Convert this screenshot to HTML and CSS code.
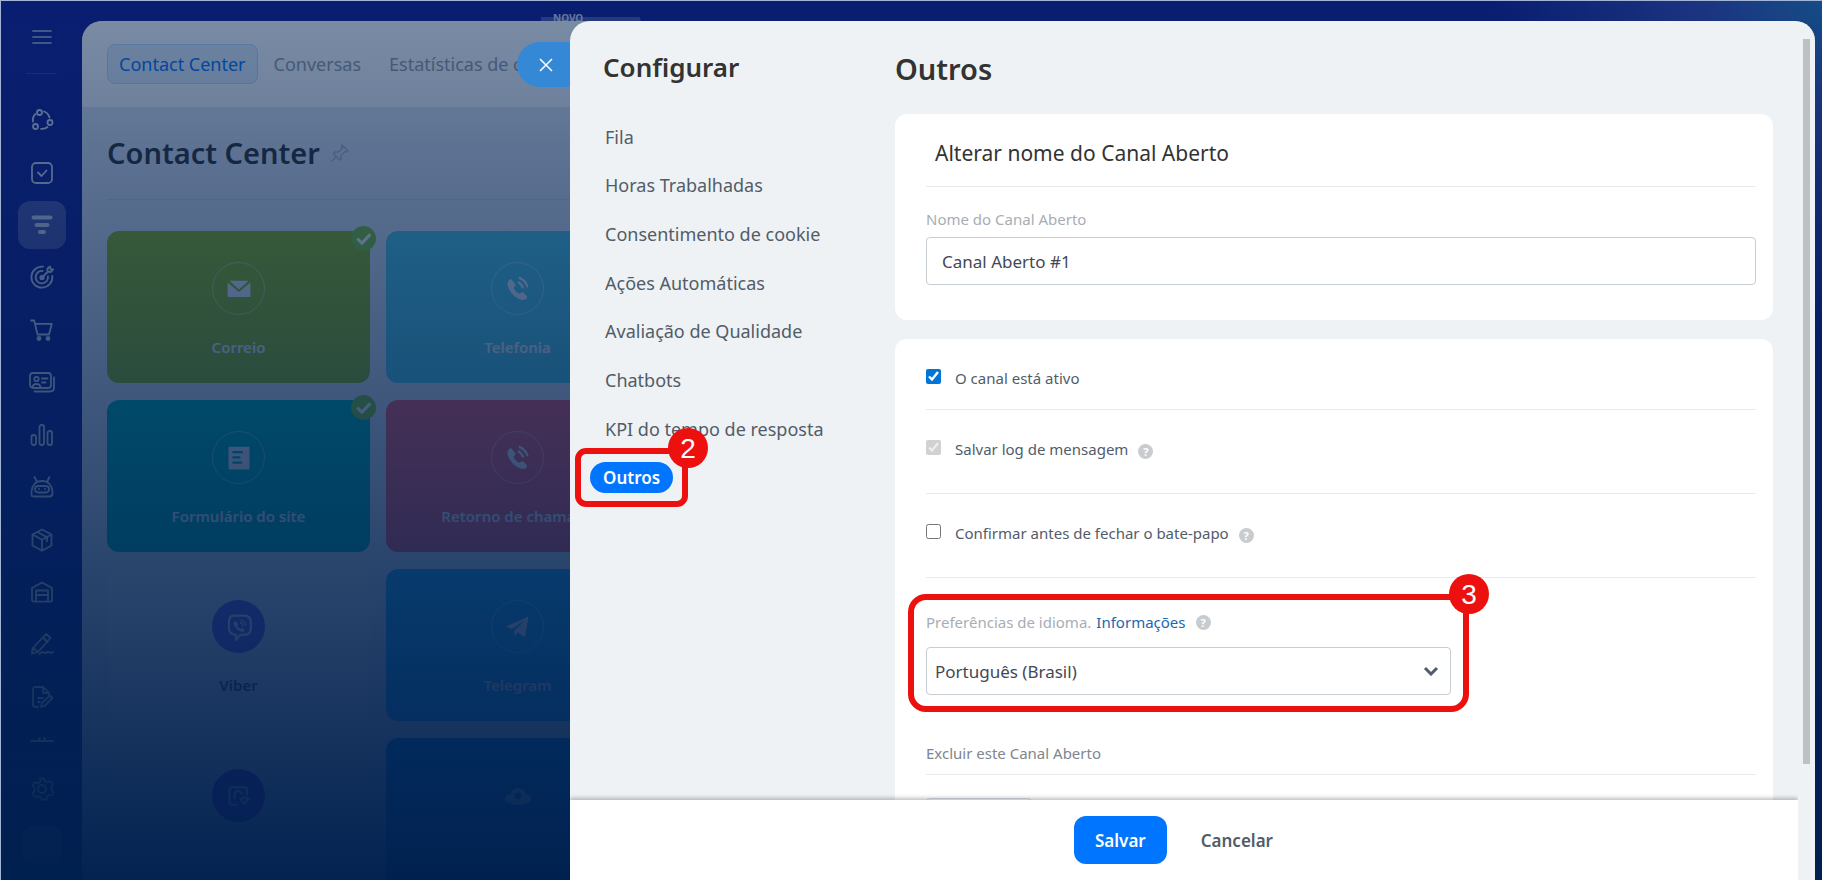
FILE: index.html
```html
<!DOCTYPE html>
<html lang="pt-BR">
<head>
    <meta charset="UTF-8">
    <meta name="viewport" content="width=device-width, initial-scale=1.0">
    <title>Contact Center - Configurar</title>
    <link rel="stylesheet" href="styles.css">
</head>
<body>
    <div class="app">
        <aside class="sidebar">
            <button class="menu-button" aria-label="Menu">
                <svg class="icon" viewBox="0 0 24 24"><path d="M3 6h18M3 12h18M3 18h18"/></svg>
            </button>
            <hr class="sidebar-line">
            <ul class="sidebar-list">
                <li><a href="#" aria-label="Feed"><svg class="icon" viewBox="0 0 24 24"><circle cx="9.500" cy="4.500" r="2.500"/><circle cx="20" cy="14.500" r="2.500"/><circle cx="5.500" cy="18.500" r="2.500"/><path d="M3 13.500C2.500 10.500 3.200 8 5.500 6M14 3.500c2.800.9 4.700 3 5.500 6M11 20.800c2.800.3 4.800-.3 6.500-1.800"/></svg></a></li>
                <li><a href="#" aria-label="Tarefas"><svg class="icon" viewBox="0 0 24 24"><rect x="2" y="2" width="20" height="20" rx="4"/><path d="M8 11.500l3.500 3.500 5-5.500"/></svg></a></li>
                <li><a href="#" class="current" aria-label="CRM"><svg class="icon icon-thick" viewBox="0 0 24 24"><path d="M3.500 4.500h17M6.500 12h11M10 19h4"/></svg></a></li>
                <li><a href="#" aria-label="Marketing"><svg class="icon" viewBox="0 0 24 24"><path d="M13 1.700A10.500 10.500 0 1 0 22.300 11"/><path d="M12.500 6A6.200 6.200 0 1 0 18 11.500"/><circle cx="12" cy="12.500" r="1.700"/><path d="M12 12.500l6-6M17.500 6.500v-3l2.500-2 .5 2.500 2.500.5-2 2.500z"/></svg></a></li>
                <li><a href="#" aria-label="Loja"><svg class="icon" viewBox="0 0 24 24"><path d="M1 2.500h3.200l3.300 14h11.500l2.800-10.700H5"/><circle cx="9" cy="20.500" r="1.500" fill="currentColor"/><circle cx="18" cy="20.500" r="1.500" fill="currentColor"/></svg></a></li>
                <li><a href="#" aria-label="Contatos"><svg class="icon icon-wide" viewBox="0 0 28 24"><rect x="2" y="3" width="21" height="15" rx="3"/><path d="M26 7.500v10c0 3-1.500 4-4 4H6.500"/><circle cx="8.500" cy="9" r="2.200"/><path d="M4.500 17c.5-4 7.500-4 8 0M14 8.500h5.500M14 12.500h3.500"/></svg></a></li>
                <li><a href="#" aria-label="Relatórios"><svg class="icon" viewBox="0 0 24 24"><rect x="1.500" y="12" width="4.500" height="10" rx="2"/><rect x="9.500" y="2" width="4.500" height="20" rx="2"/><rect x="17.500" y="8" width="4.500" height="14" rx="2"/></svg></a></li>
                <li><a href="#" aria-label="Automação"><svg class="icon" viewBox="0 0 24 24"><path d="M6.500 6L4.500 2M17.500 6l2-4M1.500 20.500v-4C2 10 6 6 12 6s10 4 10.500 10.500v2c0 2-1 3-3 3h-15c-2 0-3-.5-3-1z"/><rect x="5" y="11" width="14" height="6.500" rx="3.200"/><path d="M9 14h.1M15 14h.1"/></svg></a></li>
                <li><a href="#" aria-label="Estoque"><svg class="icon" viewBox="0 0 24 24"><path d="M12 1.500l9.500 5v11L12 22.800l-9.500-5.300v-11zM2.500 6.500l9.500 5.300 9.500-5.300M12 11.800v11M7.500 4l9.500 5.300v4"/></svg></a></li>
                <li><a href="#" aria-label="Armazém"><svg class="icon" viewBox="0 0 24 24"><path d="M2 8l10-5.500L22 8v12c0 1-.7 1.700-1.700 1.700H3.700C2.700 21.700 2 21 2 20zM6 21.500V10.500h12v11M6 15h12"/></svg></a></li>
                <li><a href="#" aria-label="Assinatura"><svg class="icon" viewBox="0 0 24 24"><path d="M2.500 16.500L16 2l4.500 4L8 20l-6 1.500zM13 5.500l4.500 4.500M3 16l5 4M9.500 22c4-5 4 1 7-1.500s2 2.500 6.500-.5"/></svg></a></li>
                <li><a href="#" aria-label="Documentos"><svg class="icon" viewBox="0 0 24 24"><path d="M8 22H5.500c-1.500 0-2.500-1-2.500-2.500v-15C3 3 4 2 5.500 2H13l6 6v2M13 2v6h6M8 13h5M8 17h2M11 22l1-4 8-7.500 2.500 2.500-8 8z"/></svg></a></li>
            </ul>
            <div class="sidebar-more">
                <svg class="icon" viewBox="0 0 24 24"><path d="M1 12h22M8 12l2-3M14 9l2 3"/></svg>
            </div>
            <button class="settings-button" aria-label="Configurações">
                <svg class="icon" viewBox="0 0 24 24"><circle cx="12" cy="12" r="4"/><path d="M10 1.500h4l1 3 2.500 1 3-1.300 2.300 3-1.800 2.800.5 2.500 2 2-1.500 3.500-3 .2-2 2-.5 2.500h-4.500l-1.500-2.500-3-.7-3 .3-2-3.500 2-2.500v-2.500l-2-2.800 2.300-3.300 3.200 1 2.500-1.500z"/></svg>
            </button>
            <div class="avatar"></div>
        </aside>

        <div class="workspace">
            <div class="topbar"><span class="new-badge">NOVO</span></div>
            <main class="panel">
                <nav class="tabs">
                    <a href="#" class="tab tab-active">Contact Center</a>
                    <a href="#" class="tab">Conversas</a>
                    <a href="#" class="tab">Estatísticas de conversas</a>
                </nav>
                <div class="panel-title">
                    <h1>Contact Center</h1>
                    <svg class="pin" viewBox="0 0 20 20"><path d="M12 2l6 6-1.500 1-1.500-.5-4 4v3.500L9.500 17 3.500 10.500 5 9h3.500l4-4L11.500 3.500zM6 14l-4.500 4.500"/></svg>
                </div>
                <div class="tiles">
                    <a href="#" class="tile tile-mail">
                        <span class="tile-check"><svg viewBox="0 0 24 24"><path d="M6 12l4.500 4.500L18.500 8"/></svg></span>
                        <span class="tile-icon"><svg viewBox="0 0 32 32"><path d="M5 6.500h22l-11 10zM3 8.500l13 11 13-11V25H3z"/></svg></span>
                        <span class="tile-name">Correio</span>
                    </a>
                    <a href="#" class="tile tile-phone">
                        <span class="tile-icon"><svg viewBox="0 0 32 32"><path d="M8 4.500c-4 1.500-5 5.500-3 10 3 6.500 8 11.500 14 13.500 4 1.200 7.500-.5 7.500-3.500l-5-5-4 2c-3-1.500-5.500-4-6.500-7l2.500-3.500z"/><path class="wave" d="M16 8c3 1.500 5 4 6 7.500M17 3c5 2 8.500 6 10 11"/></svg></span>
                        <span class="tile-name">Telefonia</span>
                    </a>
                    <a href="#" class="tile tile-form">
                        <span class="tile-check"><svg viewBox="0 0 24 24"><path d="M6 12l4.500 4.500L18.500 8"/></svg></span>
                        <span class="tile-icon"><svg viewBox="0 0 32 32"><path fill-rule="evenodd" d="M4 3h24v26H4zM8.500 8v2.500h12V8zM8.500 14v2.500h9V14zM8.500 20v2.500h11V20z"/></svg></span>
                        <span class="tile-name">Formulário do site</span>
                    </a>
                    <a href="#" class="tile tile-callback">
                        <span class="tile-icon"><svg viewBox="0 0 32 32"><path d="M8 4.500c-4 1.500-5 5.500-3 10 3 6.500 8 11.500 14 13.500 4 1.200 7.500-.5 7.500-3.500l-5-5-4 2c-3-1.500-5.500-4-6.500-7l2.500-3.500z"/><path class="wave" d="M16 8c3 1.500 5 4 6 7.500M17 3c5 2 8.500 6 10 11"/></svg></span>
                        <span class="tile-name">Retorno de chamada</span>
                    </a>
                    <a href="#" class="tile tile-plain">
                        <span class="tile-icon icon-viber"><svg viewBox="0 0 32 32"><path class="wave" d="M10 3h12c4.500 0 7.500 2.500 7.500 8v6c0 5.500-2.500 8-8 8h-4l-5 5.500V25c-6-.5-8-3-8-8v-6c0-5.500 1.500-8 5.500-8z"/><path d="M12 9c-2.500 1-2.500 2.500-1.500 5 2 4 5 6.500 8.500 7.500 2 .5 3.500-1 3.500-2.500l-3-2-2 1c-2-1-3-2-3.500-4l1-1.500z"/><path class="thin" d="M17 11c2.500.5 3.500 2 4 4M17.500 8c3.500.5 6 3 6.500 6.500"/></svg></span>
                        <span class="tile-name">Viber</span>
                    </a>
                    <a href="#" class="tile tile-telegram">
                        <span class="tile-icon"><svg viewBox="0 0 32 32"><path d="M2 15.500L28 4l-4 24-8-6-4 5v-7l12-12L9 18.500z"/></svg></span>
                        <span class="tile-name">Telegram</span>
                    </a>
                    <a href="#" class="tile tile-plain">
                        <span class="tile-icon icon-whatsapp"><svg viewBox="0 0 32 32"><path class="wave" d="M14 26H8c-2 0-3-1-3-3V9c0-2 1-3 3-3h14c2 0 3 1 3 3v6M11 19v-5c0-5 8-5 8 0M18 20l4 5 5-5-5-3z"/></svg></span>
                    </a>
                    <a href="#" class="tile tile-cloud">
                        <span class="tile-icon icon-bare"><svg viewBox="0 0 32 32"><path fill-rule="evenodd" d="M1 20c0-4 3-6 6-6 2-5 5-7 9-7s8 3 9 7c4 0 6 3 6 6s-3 5-6 4c-5 3-13 3-18 0-4 0-6-1-6-4zM12 16a4 4 0 1 0 8 0a4 4 0 1 0-8 0z"/></svg></span>
                    </a>
                </div>
            </main>
        </div>

        <div class="overlay"></div>

        <section class="slider">
            <button class="close-button" aria-label="Fechar">
                <svg viewBox="0 0 14 14"><path d="M1 1l12 12M13 1L1 13"/></svg>
            </button>
            <div class="frame">
                <div class="content">
                    <nav class="settings-nav">
                        <h2>Configurar</h2>
                        <ul>
                            <li><a href="#">Fila</a></li>
                            <li><a href="#">Horas Trabalhadas</a></li>
                            <li><a href="#">Consentimento de cookie</a></li>
                            <li><a href="#">Ações Automáticas</a></li>
                            <li><a href="#">Avaliação de Qualidade</a></li>
                            <li><a href="#">Chatbots</a></li>
                            <li><a href="#">KPI do tempo de resposta</a></li>
                            <li>
                                <a href="#" class="selected">Outros</a>
                                <div class="mark mark-nav"><span class="mark-number">2</span></div>
                            </li>
                        </ul>
                    </nav>
                    <form class="settings" id="settings">
                        <h2>Outros</h2>
                        <div class="card card-name">
                            <h3>Alterar nome do Canal Aberto</h3>
                            <label class="field-label" for="lineName">Nome do Canal Aberto</label>
                            <input type="text" id="lineName" class="text-input" value="Canal Aberto #1">
                        </div>
                        <div class="card card-options">
                            <div class="option option-first">
                                <input type="checkbox" id="active" checked>
                                <label for="active">O canal está ativo</label>
                            </div>
                            <div class="option">
                                <input type="checkbox" id="saveLog" checked disabled>
                                <label for="saveLog">Salvar log de mensagem</label>
                                <span class="help">?</span>
                            </div>
                            <div class="option">
                                <input type="checkbox" id="confirmClose">
                                <label for="confirmClose">Confirmar antes de fechar o bate-papo</label>
                                <span class="help">?</span>
                            </div>
                            <div class="language">
                                <div class="language-label">
                                    <label for="language">Preferências de idioma.</label>
                                    <a href="#">Informações</a>
                                    <span class="help">?</span>
                                </div>
                                <div class="select-box">
                                    <select id="language">
                                        <option>Português (Brasil)</option>
                                    </select>
                                    <svg class="chevron" viewBox="0 0 16 10"><path d="M2 2l6 6 6-6"/></svg>
                                </div>
                                <div class="mark mark-language"><span class="mark-number">3</span></div>
                            </div>
                            <h4>Excluir este Canal Aberto</h4>
                            <button type="button" class="delete-button" aria-label="Excluir"></button>
                        </div>
                    </form>
                </div>
                <footer class="footer">
                    <button type="submit" form="settings" class="save-button">Salvar</button>
                    <button type="button" class="cancel-button">Cancelar</button>
                </footer>
            </div>
            <div class="scrollbar"><div class="thumb"></div></div>
        </section>
    </div>
</body>
</html>
```

FILE: styles.css
```css
* {
    box-sizing: border-box;
}

body {
    margin: 0;
    font-family: "Noto Sans", "Open Sans", sans-serif;
    color: #525c69;
}

h1, h2, h3, h4, ul {
    margin: 0;
    padding: 0;
}

ul {
    list-style: none;
}

a {
    color: inherit;
    text-decoration: none;
}

button {
    border: none;
    padding: 0;
    background: none;
    font-family: inherit;
    cursor: pointer;
}

.app {
    position: relative;
    display: flex;
    height: 100vh;
    overflow: hidden;
    border-top: 1px solid #a3b5d6;
    border-left: 1px solid #a3b5d6;
    background: radial-gradient(circle at 100% 0, #2a78c0 0, #3848b4 120px, #131c94 330px);
}

/* Sidebar */
.sidebar {
    display: flex;
    flex-direction: column;
    align-items: center;
    width: 81px;
    flex-shrink: 0;
    padding-top: 20px;
    color: #d2daea;
}

.icon {
    display: block;
    width: 24px;
    height: 24px;
    fill: none;
    stroke: currentColor;
    stroke-width: 1.8;
    stroke-linecap: round;
    stroke-linejoin: round;
}

.icon-wide {
    width: 28px;
}

.icon-thick {
    stroke-width: 4;
}

.menu-button {
    display: flex;
    align-items: center;
    height: 32px;
    color: #8592c6;
}

.sidebar-line {
    width: 31px;
    margin: 20px 0 20px;
    border: none;
    border-top: 1px solid #333fa6;
}

.sidebar-list {
    display: flex;
    flex-direction: column;
    height: 629px;
    flex-shrink: 0;
}

.sidebar-list li {
    display: flex;
    align-items: center;
    flex: 1;
}

.sidebar-list a {
    display: flex;
    align-items: center;
    justify-content: center;
    width: 48px;
    height: 48px;
    border-radius: 12px;
}

.sidebar-list .current {
    background: rgba(255, 255, 255, 0.26);
}

.sidebar-more {
    height: 22px;
    padding-top: 6px;
    overflow: hidden;
}

.settings-button {
    display: flex;
    margin: 32px 0 25px;
    color: #cfd6e6;
}

.avatar {
    width: 40px;
    height: 38px;
    border-radius: 12px;
    background: #6a5aa0;
    flex-shrink: 0;
}

/* Workspace */
.workspace {
    display: flex;
    flex-direction: column;
    flex: 1;
    margin-right: 7px;
}

.topbar {
    height: 20px;
    padding: 11px 0 0 459px;
    flex-shrink: 0;
}

.new-badge {
    display: block;
    width: 100px;
    padding-left: 12px;
    background: linear-gradient(transparent 5px, #4a56ae 5px);
    border-radius: 0 10px 0 0;
    color: #ccd3ea;
    font-size: 10px;
    line-height: 12px;
    font-weight: 700;
}

.panel {
    position: relative;
    flex: 1;
    min-height: 0;
    overflow: hidden;
    border-radius: 20px 20px 0 0;
    background: #e0e6f2;
}

.tabs {
    display: flex;
    align-items: center;
    gap: 4px;
    height: 86px;
    padding-left: 25px;
    background: #fafcff;
    white-space: nowrap;
}

.tab {
    padding: 0 11px;
    border: 1px solid transparent;
    border-radius: 8px;
    font-size: 18px;
    line-height: 38px;
    color: #969ca6;
}

.tab-active {
    border-color: #b4dcff;
    background: #e2edfb;
    color: #0075ff;
}

.panel-title {
    display: flex;
    align-items: center;
    gap: 10px;
    height: 93px;
    margin-left: 25px;
    border-bottom: 1px solid #cdd5e4;
}

.panel-title h1 {
    font-size: 29px;
    line-height: 40px;
    font-weight: 600;
    color: #333;
}

.pin {
    width: 20px;
    height: 20px;
    fill: none;
    stroke: #b0b9c9;
    stroke-width: 1.5;
}

.tiles {
    display: grid;
    grid-template-columns: 263px 263px;
    grid-auto-rows: 152px;
    gap: 17px 16px;
    padding: 31px 25px;
}

.tile {
    position: relative;
    display: flex;
    flex-direction: column;
    align-items: center;
    padding-top: 31px;
    border-radius: 12px;
    color: #f0f2ff;
}

.tile-mail {
    background: #92ba15;
}

.tile-phone {
    background: #54cbe4;
}

.tile-form {
    background: #00b4b0;
}

.tile-callback {
    background: #f85a6c;
}

.tile-telegram {
    background: #27b0f8;
}

.tile-cloud {
    background: #0d90e8;
}

.tile-plain {
    background: #e8ecf5;
    color: #454d58;
}

.tile-icon {
    display: flex;
    align-items: center;
    justify-content: center;
    width: 53px;
    height: 53px;
    border: 1px solid rgba(255, 255, 255, 0.4);
    border-radius: 50%;
}

.tile-icon svg {
    width: 28px;
    height: 28px;
    fill: #f0f2ff;
}

.tile-icon .wave, .tile-icon .thin {
    fill: none;
    stroke: #f0f2ff;
    stroke-width: 2.5;
}

.tile-icon .thin {
    stroke-width: 1.2;
}

.icon-viber {
    border-color: transparent;
    background: #7360f2;
}

.icon-whatsapp {
    border-color: transparent;
    background: #6a30d8;
}

.icon-bare {
    border-color: transparent;
}

.tile-name {
    margin-top: 21px;
    font-size: 15px;
    line-height: 22px;
    font-weight: 600;
}

.tile-check {
    position: absolute;
    top: -5px;
    right: -6px;
    width: 25px;
    height: 25px;
    border-radius: 50%;
    background: #84c832;
}

.tile-check svg {
    display: block;
    fill: none;
    stroke: #fff;
    stroke-width: 3;
}

.overlay {
    position: absolute;
    inset: 0;
    background: linear-gradient(rgba(0, 32, 78, 0.5), rgba(0, 32, 78, 0.99));
}

/* Slider with the settings */
.slider {
    position: absolute;
    top: 20px;
    right: 7px;
    bottom: 0;
    left: 569px;
    display: flex;
    border-radius: 20px 20px 0 0;
    background: #eef2f4;
}

.close-button {
    position: absolute;
    top: 21px;
    left: -53px;
    display: flex;
    align-items: center;
    width: 53px;
    height: 45px;
    padding-left: 22px;
    border-radius: 23px 0 0 23px;
    background: #3488d6;
}

.close-button svg {
    width: 14px;
    height: 14px;
    stroke: #fff;
    stroke-width: 1.5;
}

.frame {
    display: flex;
    flex-direction: column;
    flex: 1;
    min-width: 0;
}

.content {
    display: flex;
    flex: 1;
    min-height: 0;
    overflow: hidden;
}

.settings-nav {
    width: 325px;
    flex-shrink: 0;
    padding: 28px 20px 0;
}

.settings-nav h2 {
    padding-left: 13px;
    font-size: 26px;
    line-height: 36px;
    font-weight: 600;
    color: #333;
}

.settings-nav ul {
    display: flex;
    flex-direction: column;
    height: 389px;
    margin-top: 28px;
}

.settings-nav li {
    position: relative;
    display: flex;
    align-items: center;
    flex: 1;
}

.settings-nav a {
    padding: 0 15px;
    border-radius: 16px;
    font-size: 18px;
    line-height: 31px;
    white-space: nowrap;
}

.settings-nav .selected {
    padding: 0 13px;
    background: #0075ff;
    color: #fff;
    font-size: 17px;
    font-weight: 600;
}

.settings {
    flex: 1;
    min-width: 0;
    padding: 28px 25px 0 0;
}

.settings h2 {
    font-size: 29px;
    line-height: 40px;
    font-weight: 600;
    color: #333;
}

.card {
    padding: 0 17px 35px 31px;
    border-radius: 12px;
    background: #fff;
}

.card-name {
    margin: 25px 0 19px;
}

.card h3 {
    padding: 24px 9px 18px;
    border-bottom: 1px solid #e9ebed;
    font-size: 21px;
    line-height: 30px;
    font-weight: 400;
    color: #333;
}

.field-label {
    display: block;
    padding: 21px 0 6px;
    font-size: 15px;
    line-height: 23px;
    color: #a8adb4;
}

.text-input, .select-box select {
    display: block;
    width: 100%;
    height: 48px;
    border: 1px solid #c6cdd3;
    border-radius: 4px;
    background: #fff;
    font-family: inherit;
    font-size: 17px;
    color: #424956;
}

.text-input {
    padding: 0 15px;
}

.option {
    display: flex;
    align-items: center;
    padding: 27px 0 32px;
    border-bottom: 1px solid #e9ebed;
    font-size: 15px;
    line-height: 24px;
}

.option-first {
    padding-bottom: 19px;
}

.option input {
    width: 15px;
    height: 15px;
    margin: 0 14px 3px 0;
    accent-color: #0075d7;
}

.help {
    width: 15px;
    height: 15px;
    margin-left: 10px;
    border-radius: 50%;
    background: #c9cccf;
    color: #fff;
    font-size: 11px;
    line-height: 15px;
    font-weight: 700;
    text-align: center;
}

.option .help {
    margin-top: 4px;
}

.language {
    position: relative;
    width: 525px;
    max-width: 100%;
    padding-top: 32px;
}

.language-label {
    display: flex;
    align-items: center;
    padding-bottom: 13px;
    font-size: 15px;
    line-height: 24px;
    color: #a8adb4;
}

.language-label a {
    margin-left: 5px;
    color: #2067b0;
}

.select-box {
    position: relative;
}

.select-box select {
    appearance: none;
    padding: 0 8px;
}

.chevron {
    position: absolute;
    top: 19px;
    right: 12px;
    width: 16px;
    height: 10px;
    fill: none;
    stroke: #525c69;
    stroke-width: 3;
    pointer-events: none;
}

.card h4 {
    padding: 46px 0 9px;
    border-bottom: 1px solid #e9ebed;
    font-size: 15px;
    line-height: 24px;
    font-weight: 400;
    color: #80868e;
}

.delete-button {
    width: 106px;
    height: 40px;
    margin-top: 23px;
    border: 1px solid #d9ddec;
    border-radius: 4px;
}

/* Numbered red frames */
.mark {
    position: absolute;
    border: 6px solid #ec110f;
    pointer-events: none;
}

.mark-nav {
    top: -5px;
    left: -15px;
    width: 113px;
    height: 59px;
    border-radius: 11px;
}

.mark-language {
    top: 16px;
    right: -18px;
    left: -18px;
    height: 118px;
    border-radius: 18px;
}

.mark-number {
    position: absolute;
    top: -26px;
    right: -26px;
    width: 40px;
    height: 40px;
    border-radius: 50%;
    background: #ec110f;
    color: #fff;
    font-family: "Liberation Sans", Arial, sans-serif;
    font-size: 28px;
    line-height: 41px;
    text-align: center;
}

.footer {
    position: relative;
    display: flex;
    align-items: center;
    justify-content: center;
    gap: 13px;
    height: 80px;
    flex-shrink: 0;
    background: #fff;
    box-shadow: 0 -2px 4px rgba(0, 0, 0, 0.25);
    clip-path: inset(-8px 0 0 0);
}

.save-button, .cancel-button {
    height: 48px;
    padding: 0 21px;
    border-radius: 12px;
    font-size: 17px;
    font-weight: 600;
    color: #525c69;
}

.save-button {
    background: #0075ff;
    color: #fff;
}

.scrollbar {
    width: 17px;
    padding: 18px 5px 0;
}

.thumb {
    width: 7px;
    height: 725px;
    max-height: 86vh;
    background: #bdc1c3;
}
```
